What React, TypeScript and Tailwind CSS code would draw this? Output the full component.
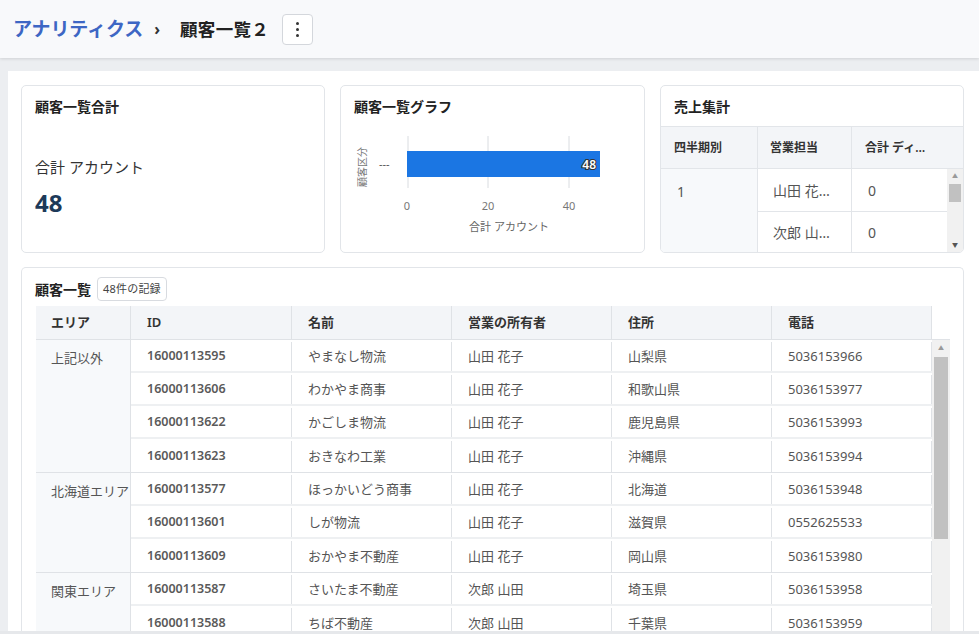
import React from "react";

const font = { fontFamily: '"Noto Sans", "Noto Sans CJK JP", sans-serif' };

type Row = { id: string; name: string; owner: string; addr: string; tel: string };
const groups: { area: string; rows: Row[] }[] = [
  {
    area: "上記以外",
    rows: [
      { id: "16000113595", name: "やまなし物流", owner: "山田 花子", addr: "山梨県", tel: "5036153966" },
      { id: "16000113606", name: "わかやま商事", owner: "山田 花子", addr: "和歌山県", tel: "5036153977" },
      { id: "16000113622", name: "かごしま物流", owner: "山田 花子", addr: "鹿児島県", tel: "5036153993" },
      { id: "16000113623", name: "おきなわ工業", owner: "山田 花子", addr: "沖縄県", tel: "5036153994" },
    ],
  },
  {
    area: "北海道エリア",
    rows: [
      { id: "16000113577", name: "ほっかいどう商事", owner: "山田 花子", addr: "北海道", tel: "5036153948" },
      { id: "16000113601", name: "しが物流", owner: "山田 花子", addr: "滋賀県", tel: "0552625533" },
      { id: "16000113609", name: "おかやま不動産", owner: "山田 花子", addr: "岡山県", tel: "5036153980" },
    ],
  },
  {
    area: "関東エリア",
    rows: [
      { id: "16000113587", name: "さいたま不動産", owner: "次郎 山田", addr: "埼玉県", tel: "5036153958" },
      { id: "16000113588", name: "ちば不動産", owner: "次郎 山田", addr: "千葉県", tel: "5036153959" },
    ],
  },
];

function Chart() {
  return (
    <svg width="300" height="125" className="block">
      {[67, 147, 228].map((x) => (
        <line key={x} x1={x} x2={x} y1={19} y2={71} stroke="#d9dce0" strokeWidth="1" />
      ))}
      <rect x="66" y="34" width="193" height="26" fill="#1b76e3" />
      <text x="255" y="51.5" textAnchor="end" fontSize="12" fontWeight="600" fill="#fff" stroke="#333" strokeWidth="2.2" paintOrder="stroke" style={font}>48</text>
      <text x="38" y="51" fontSize="11" fill="#555" style={font}>---</text>
      <text x="0" y="0" fontSize="10" fill="#777" textAnchor="middle" transform="translate(25 50) rotate(-90)" style={font}>顧客区分</text>
      <text x="66" y="93" fontSize="11" fill="#777" textAnchor="middle" style={font}>0</text>
      <text x="147" y="93" fontSize="11" fill="#777" textAnchor="middle" style={font}>20</text>
      <text x="228" y="93" fontSize="11" fill="#777" textAnchor="middle" style={font}>40</text>
      <text x="168" y="114" fontSize="11" fill="#666" textAnchor="middle" style={font}>合計 アカウント</text>
    </svg>
  );
}

export default function App() {
  return (
    <div className="h-[634px] w-[979px] overflow-hidden flex flex-col bg-[#eceef1]" style={font}>
      <header className="h-[58px] shrink-0 bg-[#f8f9fb] flex items-center pl-[13px] shadow-[0_1px_3px_rgba(0,0,0,0.12)] relative z-10">
        <span className="text-[19px] font-bold text-[#3d66c4] tracking-[-0.1px]">アナリティクス</span>
        <span className="ml-[11px] text-[16px] font-bold text-[#333]">›</span>
        <span className="ml-[20px] text-[17.5px] font-bold text-[#222] tracking-[0.3px]">顧客一覧２</span>
        <button className="ml-[13px] w-[31px] h-[31px] rounded-[4px] border border-[#d4d7dc] bg-white flex flex-col items-center justify-center gap-[3px]">
          <span className="w-[3px] h-[3px] rounded-full bg-[#333]" />
          <span className="w-[3px] h-[3px] rounded-full bg-[#333]" />
          <span className="w-[3px] h-[3px] rounded-full bg-[#333]" />
        </button>
      </header>
      <main className="flex-1 pt-[13px] pl-[8px] min-h-0">
        <div className="h-full bg-white pt-[14px] pl-[13px] pr-[15px] flex flex-col gap-[14px]">
          <div className="flex gap-[15px]">
            <div className="w-[304px] h-[168px] border border-[#e2e5e9] rounded-[5px] px-[13px] pt-[11px]">
              <div className="text-[14px] font-bold text-[#222] leading-[20px]">顧客一覧合計</div>
              <div className="mt-[40px] text-[15px] text-[#333] leading-[20px]">合計 アカウント</div>
              <div className="mt-[11px] text-[24px] font-bold text-[#1d3a59] leading-[30px]">48</div>
            </div>
            <div className="w-[305px] h-[168px] border border-[#e2e5e9] rounded-[5px] pt-[11px]">
              <div className="px-[13px] text-[14px] font-bold text-[#222] leading-[20px]">顧客一覧グラフ</div>
              <Chart />
            </div>
            <div className="w-[304px] h-[168px] border border-[#e2e5e9] rounded-[5px] overflow-hidden flex flex-col">
              <div className="h-[40px] shrink-0 px-[13px] flex items-center text-[14px] font-bold text-[#222]">売上集計</div>
              <div className="h-[43px] shrink-0 flex bg-[#f3f5f8] border-t border-b border-[#e2e5e9] text-[12px] font-semibold text-[#333]">
                <div className="w-[97px] border-r border-[#e2e5e9] flex items-center pl-[13px]">四半期別</div>
                <div className="w-[94px] border-r border-[#e2e5e9] flex items-center pl-[12px]">営業担当</div>
                <div className="flex-1 flex items-center pl-[13px]">合計 ディ…</div>
              </div>
              <div className="flex-1 flex min-h-0 text-[14px] text-[#555]">
                <div className="w-[97px] bg-[#f7f9fb] border-r border-[#e2e5e9] pl-[16px] pt-[12px]">1</div>
                <div className="w-[94px] border-r border-[#e2e5e9]">
                  <div className="h-[43px] flex items-center pl-[15px] border-b border-[#e2e5e9]">山田 花…</div>
                  <div className="h-[41px] flex items-center pl-[15px]">次郎 山…</div>
                </div>
                <div className="flex-1">
                  <div className="h-[43px] flex items-center pl-[16px] border-b border-[#e2e5e9]">0</div>
                  <div className="h-[41px] flex items-center pl-[16px]">0</div>
                </div>
                <div className="w-[16px] bg-[#f1f1f1] flex flex-col items-center">
                  <span className="text-[6px] leading-[10px] text-[#999] mt-[2px]">▲</span>
                  <div className="w-[12px] h-[18px] bg-[#c1c1c1] mt-[3px]" />
                  <div className="flex-1" />
                  <span className="text-[6px] leading-[10px] text-[#555] mb-[2px]">▼</span>
                </div>
              </div>
            </div>
          </div>
          <div className="flex-1 min-h-0 border border-[#e2e5e9] border-b-0 rounded-t-[5px] pl-[13px] pt-[9px] pr-[13px] flex flex-col">
            <div className="flex items-center h-[24px] shrink-0">
              <span className="text-[14px] font-bold text-[#222]">顧客一覧</span>
              <span className="ml-[6px] h-[24px] px-[5px] flex items-center border border-[#d8dbe0] rounded-[4px] text-[11px] tracking-[0.2px] text-[#444]">48件の記録</span>
            </div>
            <div className="mt-[5px] ml-[1px] w-[914px] flex-1 min-h-0 flex flex-col">
              <div className="h-[34px] shrink-0 flex bg-[#f3f5f8] border-b border-[#dfe2e6] text-[13px] font-semibold text-[#333]">
                <div className="w-[95px] border-r border-[#dfe2e6] flex items-center pl-[15px]">エリア</div>
                <div className="w-[161px] border-r border-[#dfe2e6] flex items-center pl-[16px]">ID</div>
                <div className="w-[160px] border-r border-[#dfe2e6] flex items-center pl-[16px]">名前</div>
                <div className="w-[160px] border-r border-[#dfe2e6] flex items-center pl-[16px]">営業の所有者</div>
                <div className="w-[160px] border-r border-[#dfe2e6] flex items-center pl-[16px]">住所</div>
                <div className="w-[160px] border-r border-[#dfe2e6] flex items-center pl-[16px]">電話</div>
                <div className="w-[18px] bg-white" />
              </div>
              <div className="flex-1 min-h-0 flex overflow-hidden">
                <div className="flex-1">
                  {groups.map((g) => (
                    <div key={g.area} className="flex border-b border-[#dfe2e6]">
                      <div className="w-[95px] shrink-0 bg-[#f7f9fb] border-r border-[#dfe2e6] pl-[15px] pt-[9px] text-[13px] text-[#555] whitespace-nowrap">{g.area}</div>
                      <div className="flex-1">
                        {g.rows.map((r, i) => (
                          <div key={r.id} className={`h-[33px] pt-[2px] flex text-[13px] text-[#555] ${i < g.rows.length - 1 ? "border-b-2 border-[#eef0f2]" : ""}`}>
                            <div className="w-[161px] border-r border-[#dfe2e6] flex items-center pl-[16px] font-semibold text-[12.5px] text-[#5a5a5a]">{r.id}</div>
                            <div className="w-[160px] border-r border-[#dfe2e6] flex items-center pl-[16px]">{r.name}</div>
                            <div className="w-[160px] border-r border-[#dfe2e6] flex items-center pl-[16px]">{r.owner}</div>
                            <div className="w-[160px] border-r border-[#dfe2e6] flex items-center pl-[16px]">{r.addr}</div>
                            <div className="w-[160px] border-r border-[#dfe2e6] flex items-center pl-[16px]">{r.tel}</div>
                          </div>
                        ))}
                      </div>
                    </div>
                  ))}
                </div>
                <div className="w-[18px] shrink-0 bg-[#f1f1f1] flex flex-col items-center">
                  <span className="text-[6px] leading-[10px] text-[#999] mt-[3px]">▲</span>
                  <div className="w-[14px] h-[182px] bg-[#c1c1c1] mt-[4px]" />
                </div>
              </div>
            </div>
          </div>
        </div>
      </main>
      <div className="h-[3px] shrink-0 bg-[#e6e8eb]" />
    </div>
  );
}
